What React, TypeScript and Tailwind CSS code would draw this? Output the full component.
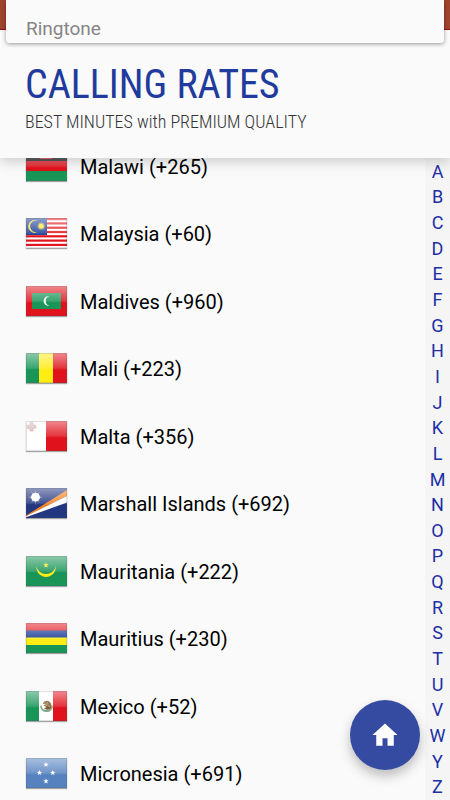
import type { ReactNode } from "react"

const LETTERS = "ABCDEFGHIJKLMNOPQRSTUVWYZ".split("")

const STAR = "0,-1 0.26,-0.34 0.95,-0.31 0.4,0.12 0.59,0.81 0,0.42 -0.59,0.81 -0.4,0.12 -0.95,-0.31 -0.26,-0.34"

function Star({ x, y, r, fill }: { x: number; y: number; r: number; fill: string }) {
  return <polygon points={STAR} fill={fill} transform={`translate(${x} ${y}) scale(${r})`} />
}

function Flag({ id, children }: { id: string; children: ReactNode }) {
  return (
    <svg viewBox="0 0 41 30" className="mb-0.5 h-[30px] w-[41px] shrink-0 shadow-[0_1px_1px_rgba(0,0,0,0.35)]" aria-hidden="true">
      <defs>
        <linearGradient id={id} x1="0" y1="0" x2="0" y2="1">
          <stop offset="0" stopColor="#fff" stopOpacity="0.5" />
          <stop offset="0.5" stopColor="#fff" stopOpacity="0.15" />
          <stop offset="0.56" stopColor="#fff" stopOpacity="0" />
        </linearGradient>
      </defs>
      {children}
      <rect width="41" height="30" fill={`url(#${id})`} />
      <rect x="0.5" y="0.5" width="40" height="29" fill="none" stroke="#555" strokeOpacity="0.18" />
    </svg>
  )
}

const countries: { name: string; code: string; flag: ReactNode }[] = [
  {
    name: "Malawi",
    code: "+265",
    flag: (
      <>
        <rect width="41" height="30" fill="#111" />
        <path d="M14 8a6 6 0 0 1 12 0z" fill="#de1820" />
        <rect y="10" width="41" height="10" fill="#e3121c" />
        <rect y="20" width="41" height="10" fill="#199557" />
      </>
    ),
  },
  {
    name: "Malaysia",
    code: "+60",
    flag: (
      <>
        <rect width="41" height="30" fill="#fff" />
        {[0, 1, 2, 3, 4, 5, 6].map((i) => (
          <rect key={i} y={i * 4.3} width="41" height="2.2" fill="#e3121c" />
        ))}
        <rect width="21" height="17" fill="#1f3f98" />
        <path d="M12 3A6.3 6.3 0 1 0 12 13.8A5.8 5.8 0 1 1 12 3z" fill="#ffe92e" />
        <circle cx="15.2" cy="8.2" r="3.6" fill="#ffe92e" opacity="0.5" />
        <circle cx="15.2" cy="8.2" r="2.4" fill="#ffe92e" />
      </>
    ),
  },
  {
    name: "Maldives",
    code: "+960",
    flag: (
      <>
        <rect width="41" height="30" fill="#e0121c" />
        <rect x="6" y="7" width="29" height="16" fill="#199557" />
        <path d="M23.3 10.3A4.75 4.75 0 1 0 23.3 19.6A4.8 4.8 0 0 1 23.3 10.3z" fill="#fff" />
      </>
    ),
  },
  {
    name: "Mali",
    code: "+223",
    flag: (
      <>
        <rect width="14" height="30" fill="#199557" />
        <rect x="13" width="15" height="30" fill="#ffec15" />
        <rect x="27" width="14" height="30" fill="#e0121c" />
      </>
    ),
  },
  {
    name: "Malta",
    code: "+356",
    flag: (
      <>
        <rect width="21" height="30" fill="#fff" />
        <rect x="20" width="21" height="30" fill="#e0121c" />
        <path d="M4 1.5h3v2.7h2.8v3H7v2.7H4V7.2H1.2v-3H4z" fill="#c6c2c2" stroke="#e98288" strokeWidth="0.7" />
      </>
    ),
  },
  {
    name: "Marshall Islands",
    code: "+692",
    flag: (
      <>
        <rect width="41" height="30" fill="#23367f" />
        <path d="M0 27.5L41 2v6L0 28.5z" fill="#f58220" />
        <path d="M0 28.3L41 8v6.5L0 29.3z" fill="#fff" />
        <path d="M9.5 1l.8 4.8 3.8-2.3-2.2 3.9 5.1 1.8-5.1 1.8 2.2 3.8-3.8-2.2-.8 5.2-.8-5.2-3.8 2.2 2.2-3.8L2 9.2l5.1-1.8-2.2-3.9 3.8 2.3z" fill="#fff" opacity="0.35" />
        <circle cx="9.5" cy="9.2" r="4.4" fill="#fff" />
      </>
    ),
  },
  {
    name: "Mauritania",
    code: "+222",
    flag: (
      <>
        <rect width="41" height="30" fill="#199557" />
        <path d="M10.2 10C10.5 24.5 29.7 24.5 30 10C27.5 20.5 12.7 20.5 10.2 10z" fill="#ffec15" />
        <Star x={20} y={9.2} r={2.9} fill="#ffec15" />
      </>
    ),
  },
  {
    name: "Mauritius",
    code: "+230",
    flag: (
      <>
        <rect width="41" height="8" fill="#e3121c" />
        <rect y="7.5" width="41" height="7.5" fill="#173893" />
        <rect y="14.5" width="41" height="8" fill="#ffec15" />
        <rect y="22" width="41" height="8" fill="#199557" />
      </>
    ),
  },
  {
    name: "Mexico",
    code: "+52",
    flag: (
      <>
        <rect width="14" height="30" fill="#199557" />
        <rect x="13" width="15" height="30" fill="#fff" />
        <rect x="27" width="14" height="30" fill="#e0121c" />
        <path d="M14.8 14.5a5.7 5.7 0 0 0 11.4 0" fill="none" stroke="#8ba878" strokeWidth="1.7" />
        <path d="M16.8 12.8c1-3 5-3.9 7-1.8 2.3 1.8 2 5.6.2 7.2-2 .9-4.7.5-6-.9l2.6-1.3-3.2-1.4 2-1z" fill="#7a5a32" />
        <path d="M18.5 12.2l2 2.6 1-3.2M22 14.4l2 1.8" stroke="#c9ad75" strokeWidth="0.8" fill="none" />
        <path d="M18 19.5h5" stroke="#67a9a1" strokeWidth="1.3" />
      </>
    ),
  },
  {
    name: "Micronesia",
    code: "+691",
    flag: (
      <>
        <rect width="41" height="30" fill="#5682bf" />
        <Star x={20} y={6.6} r={2.8} fill="#fff" />
        <Star x={13.5} y={14.8} r={2.8} fill="#fff" />
        <Star x={26.8} y={14.8} r={2.8} fill="#fff" />
        <Star x={20} y={23.2} r={2.8} fill="#fff" />
      </>
    ),
  },
]

function Header() {
  return (
    <header className="relative z-10 shrink-0 bg-[#fafafa] pb-[22px] shadow-[0_4px_12px_rgba(0,0,0,0.18)]">
      <div className="absolute inset-x-0 top-0 h-[30px] border-b border-[#8b1010] bg-[#a0452d]" />
      <div className="relative mx-1.5 flex h-[43px] items-end rounded-b-[3px] bg-[#fafafa] px-5 shadow-[0_1px_4px_rgba(0,0,0,0.4)]">
        <p className="text-[19px] leading-7 text-[#858585]">Ringtone</p>
      </div>
      <div className="px-[25px] pt-[19px] font-['Roboto_Condensed',Roboto,sans-serif]">
        <h1 className="text-[40px] leading-[46px] text-[#1f3b9d]">CALLING RATES</h1>
        <p className="text-lg leading-7 font-light text-[#333]">BEST MINUTES with PREMIUM QUALITY</p>
      </div>
    </header>
  )
}

export default function App() {
  return (
    <div className="flex h-screen flex-col overflow-hidden bg-[#fafafa] font-[Roboto,sans-serif]">
      <Header />
      <main className="relative flex min-h-0 flex-1">
        <div className="flex-1 overflow-hidden">
          <ul className="-mt-[25px] grid h-[675px] auto-rows-fr">
            {countries.map((c) => (
              <li key={c.name} className="flex items-center gap-[13px] pl-[26px] text-xl leading-4 text-black">
                <Flag id={`gloss-${c.name.replace(" ", "-")}`}>{c.flag}</Flag>
                <span>
                  {c.name} ({c.code})
                </span>
              </li>
            ))}
          </ul>
        </div>
        <nav aria-label="Country index" className="flex w-[25px] shrink-0 flex-col bg-[#f5f5f5] pt-px">
          {LETTERS.map((l) => (
            <button key={l} className="flex min-h-0 flex-1 items-center justify-center text-lg leading-5 text-[#1c2fa5]">
              {l}
            </button>
          ))}
        </nav>
        <button
          aria-label="Home"
          className="absolute right-[30px] bottom-[30px] flex size-[70px] items-center justify-center rounded-full bg-[#354ba1] shadow-[0_6px_12px_rgba(0,0,0,0.25)]"
        >
          <svg viewBox="0 0 24 24" className="size-[30px]" fill="#fff">
            <path d="M10 20.5v-6h4v6h5v-8.5h3L12 2.7 2 12h3v8.5z" />
          </svg>
        </button>
      </main>
    </div>
  )
}
